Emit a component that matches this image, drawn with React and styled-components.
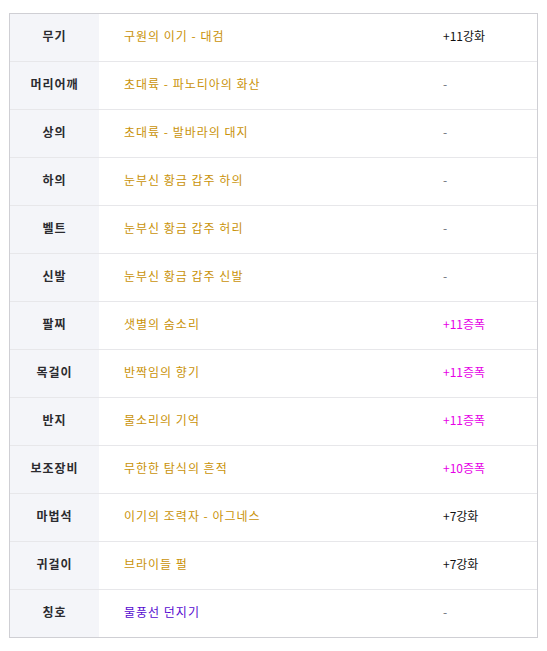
import React from "react";
import styled, { createGlobalStyle } from "styled-components";

const GlobalStyle = createGlobalStyle`
  body {
    margin: 0;
    background: #ffffff;
    font-family: "Noto Sans CJK KR", "Noto Sans", sans-serif;
  }
`;

const items = [
  { slot: "무기", name: "구원의 이기 - 대검", option: "+11강화", kind: "enchant" },
  { slot: "머리어깨", name: "초대륙 - 파노티아의 화산", option: "-", kind: "none" },
  { slot: "상의", name: "초대륙 - 발바라의 대지", option: "-", kind: "none" },
  { slot: "하의", name: "눈부신 황금 갑주 하의", option: "-", kind: "none" },
  { slot: "벨트", name: "눈부신 황금 갑주 허리", option: "-", kind: "none" },
  { slot: "신발", name: "눈부신 황금 갑주 신발", option: "-", kind: "none" },
  { slot: "팔찌", name: "샛별의 숨소리", option: "+11증폭", kind: "amplify" },
  { slot: "목걸이", name: "반짝임의 향기", option: "+11증폭", kind: "amplify" },
  { slot: "반지", name: "물소리의 기억", option: "+11증폭", kind: "amplify" },
  { slot: "보조장비", name: "무한한 탐식의 흔적", option: "+10증폭", kind: "amplify" },
  { slot: "마법석", name: "이기의 조력자 - 아그네스", option: "+7강화", kind: "enchant" },
  { slot: "귀걸이", name: "브라이들 펄", option: "+7강화", kind: "enchant" },
  { slot: "칭호", name: "물풍선 던지기", option: "-", kind: "none", rarity: "rare" },
];

const optionColors = {
  enchant: "#111111",
  amplify: "#e600e6",
  none: "#6b6f7a",
};

const Page = styled.div`
  padding: 13px 9px 0 9px;
`;

const Table = styled.div`
  width: 529px;
  box-sizing: border-box;
  border: 1px solid #cfcfd4;
  display: flex;
  flex-direction: column;
`;

const Row = styled.div`
  display: grid;
  grid-template-columns: 89px 320px 1fr;
  height: ${(p) => (p.first ? "47px" : "48px")};
  border-top: ${(p) => (p.first ? "none" : "1px solid #e7e7ea")};
  box-sizing: border-box;
`;

const Cell = styled.div`
  display: flex;
  align-items: center;
  padding-bottom: 5px;
  box-sizing: border-box;
  font-size: 12px;
`;

const Slot = styled(Cell)`
  background: #f4f5f9;
  justify-content: center;
  font-weight: 700;
  letter-spacing: 1px;
  color: #2b2b2f;
`;

const Name = styled(Cell)`
  padding-left: 25px;
  letter-spacing: 1px;
  color: ${(p) => (p.rarity === "rare" ? "#5509d0" : "#c99208")};
`;

const Option = styled(Cell)`
  padding-left: 24px;
  color: ${(p) => optionColors[p.kind]};
`;

export default function App() {
  return (
    <Page>
      <GlobalStyle />
      <Table>
        {items.map((item, i) => (
          <Row key={item.slot} first={i === 0}>
            <Slot>{item.slot}</Slot>
            <Name rarity={item.rarity}>{item.name}</Name>
            <Option kind={item.kind}>{item.option}</Option>
          </Row>
        ))}
      </Table>
    </Page>
  );
}
